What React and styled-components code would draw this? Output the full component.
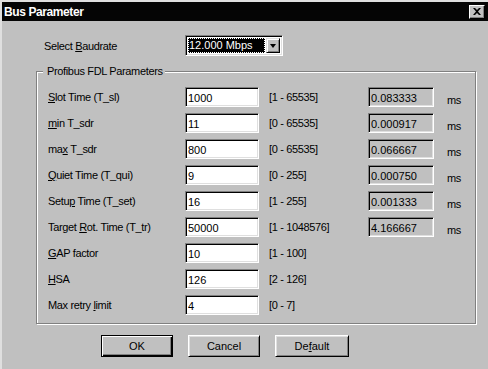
import React from "react";
import styled, { createGlobalStyle } from "styled-components";

const GlobalStyle = createGlobalStyle`
  html, body {
    margin: 0;
    padding: 0;
    background: #c0c0c0;
  }
  * {
    box-sizing: border-box;
  }
`;

const rows = [
  { pre: "", key: "S", post: "lot Time (T_sl)", value: "1000", range: "[1 - 65535]", time: "0.083333" },
  { pre: "", key: "m", post: "in T_sdr", value: "11", range: "[0 - 65535]", time: "0.000917" },
  { pre: "ma", key: "x", post: " T_sdr", value: "800", range: "[0 - 65535]", time: "0.066667" },
  { pre: "", key: "Q", post: "uiet Time (T_qui)", value: "9", range: "[0 - 255]", time: "0.000750" },
  { pre: "Setu", key: "p", post: " Time (T_set)", value: "16", range: "[1 - 255]", time: "0.001333" },
  { pre: "Target ", key: "R", post: "ot. Time (T_tr)", value: "50000", range: "[1 - 1048576]", time: "4.166667" },
  { pre: "", key: "G", post: "AP factor", value: "10", range: "[1 - 100]" },
  { pre: "", key: "H", post: "SA", value: "126", range: "[2 - 126]" },
  { pre: "Max retry ", key: "l", post: "imit", value: "4", range: "[0 - 7]" },
];

const Window = styled.div`
  width: 488px;
  height: 369px;
  background: #c0c0c0;
  border-top: 2px solid #dfdfdf;
  border-left: 2px solid #dfdfdf;
  font-family: "Liberation Sans", Arial, sans-serif;
  font-size: 11px;
  letter-spacing: -0.35px;
  color: #000;
  overflow: hidden;
`;

const TitleBar = styled.div`
  height: 19px;
  background: #050505;
  display: flex;
  align-items: center;
  justify-content: space-between;
  padding: 0 3px 0 2px;
`;

const Title = styled.span`
  color: #fff;
  font-weight: bold;
  font-size: 12px;
  letter-spacing: -0.4px;
`;

const CloseButton = styled.div`
  width: 16px;
  height: 14px;
  background: #c0c0c0;
  border-top: 1px solid #fff;
  border-left: 1px solid #fff;
  border-right: 1px solid #000;
  border-bottom: 1px solid #000;
  box-shadow: inset -1px -1px #808080;
  display: flex;
  align-items: center;
  justify-content: center;
`;

const Body = styled.div`
  display: flex;
  flex-direction: column;
`;

const BaudRow = styled.div`
  display: flex;
  align-items: center;
  margin-top: 14px;
  padding-left: 42px;
`;

const BaudLabel = styled.span`
  width: 141px;
`;

const Combo = styled.div`
  width: 98px;
  height: 21px;
  display: flex;
  align-items: stretch;
  padding: 2px;
  background: #fff;
  border-top: 1px solid #808080;
  border-left: 1px solid #808080;
  border-right: 1px solid #fff;
  border-bottom: 1px solid #fff;
  box-shadow: inset 1px 1px #000, inset -1px -1px #dfdfdf;
`;

const ComboValue = styled.div`
  flex: 1;
  background: #000;
  color: #fff;
  font-size: 11px;
  letter-spacing: 0;
  line-height: 13px;
  padding: 1px 1px;
  outline: 1px dotted #fff;
  outline-offset: -1px;
  margin-right: 1px;
`;

const DropButton = styled.div`
  width: 14px;
  background: #c0c0c0;
  border-top: 1px solid #dfdfdf;
  border-left: 1px solid #dfdfdf;
  border-right: 1px solid #000;
  border-bottom: 1px solid #000;
  box-shadow: inset 1px 1px #fff, inset -1px -1px #808080;
  display: flex;
  align-items: center;
  justify-content: center;
`;

const Arrow = styled.div`
  width: 0;
  height: 0;
  border-left: 3.5px solid transparent;
  border-right: 3.5px solid transparent;
  border-top: 4px solid #000;
`;

const Group = styled.fieldset`
  margin: 9px 0 0 34px;
  width: 440px;
  border: 1px solid #808080;
  box-shadow: inset 1px 1px #fff, 1px 1px #fff;
  padding: 9px 0 8px 11px;
  min-width: 0;
`;

const Legend = styled.legend`
  margin-left: -5px;
  padding: 0 2px 0 4px;
  background: #c0c0c0;
  line-height: 13px;
  font-size: 11px;
`;

const Grid = styled.div`
  display: grid;
  grid-template-columns: 137px 74px 109px 66px auto;
  grid-auto-rows: 20px;
  row-gap: 6px;
  align-items: center;
`;

const Label = styled.span`
  white-space: nowrap;
`;

const Field = styled.input`
  width: 74px;
  height: 20px;
  margin: 0;
  padding: 1px 2px 0;
  font-family: "Liberation Sans", Arial, sans-serif;
  font-size: 11px;
  color: #000;
  background: ${(p) => (p.readOnly && p.$shade ? "#c0c0c0" : "#fff")};
  border-top: 1px solid #808080;
  border-left: 1px solid #808080;
  border-right: 1px solid #fff;
  border-bottom: 1px solid #fff;
  box-shadow: inset 1px 1px #000, inset -1px -1px #dfdfdf;
  outline: none;
  align-self: stretch;
`;

const Range = styled.span`
  padding-left: 10px;
  white-space: nowrap;
`;

const Result = styled(Field)`
  width: 66px;
`;

const Unit = styled.span`
  padding: 5px 0 0 13px;
`;

const ButtonRow = styled.div`
  display: flex;
  gap: 15px;
  margin-top: 11px;
  padding-left: 99px;
`;

const Button = styled.div`
  width: ${(p) => p.$w || 72}px;
  height: 22px;
  display: flex;
  align-items: center;
  justify-content: center;
  font-size: 11px;
  letter-spacing: 0;
  background: #c0c0c0;
  border: 1px solid ${(p) => (p.$default ? "#000" : "transparent")};
  border-top-color: ${(p) => (p.$default ? "#000" : "#fff")};
  border-left-color: ${(p) => (p.$default ? "#000" : "#fff")};
  border-right-color: #000;
  border-bottom-color: #000;
  box-shadow: ${(p) =>
    p.$default
      ? "inset 1px 1px #fff, inset -1px -1px #000, inset -2px -2px #808080"
      : "inset 1px 1px #dfdfdf, inset -1px -1px #808080"};
`;

export default function App() {
  return (
    <>
      <GlobalStyle />
      <Window>
        <TitleBar>
          <Title>Bus Parameter</Title>
          <CloseButton>
            <svg width="8" height="7" viewBox="0 0 8 7">
              <path d="M0 0h2l2 2 2-2h2L5 3.5 8 7H6L4 5 2 7H0l3-3.5z" fill="#000" />
            </svg>
          </CloseButton>
        </TitleBar>
        <Body>
          <BaudRow>
            <BaudLabel>
              Select <u>B</u>audrate
            </BaudLabel>
            <Combo>
              <ComboValue>12.000 Mbps</ComboValue>
              <DropButton>
                <Arrow />
              </DropButton>
            </Combo>
          </BaudRow>
          <Group>
            <Legend>Profibus FDL Parameters</Legend>
            <Grid>
              {rows.map((r) => (
                <React.Fragment key={r.post}>
                  <Label>
                    {r.pre}
                    <u>{r.key}</u>
                    {r.post}
                  </Label>
                  <Field defaultValue={r.value} />
                  <Range>{r.range}</Range>
                  {r.time ? (
                    <>
                      <Result readOnly $shade defaultValue={r.time} />
                      <Unit>ms</Unit>
                    </>
                  ) : (
                    <>
                      <span />
                      <span />
                    </>
                  )}
                </React.Fragment>
              ))}
            </Grid>
          </Group>
          <ButtonRow>
            <Button $default>OK</Button>
            <Button>Cancel</Button>
            <Button $w={74}>
              De<u>f</u>ault
            </Button>
          </ButtonRow>
        </Body>
      </Window>
    </>
  );
}
